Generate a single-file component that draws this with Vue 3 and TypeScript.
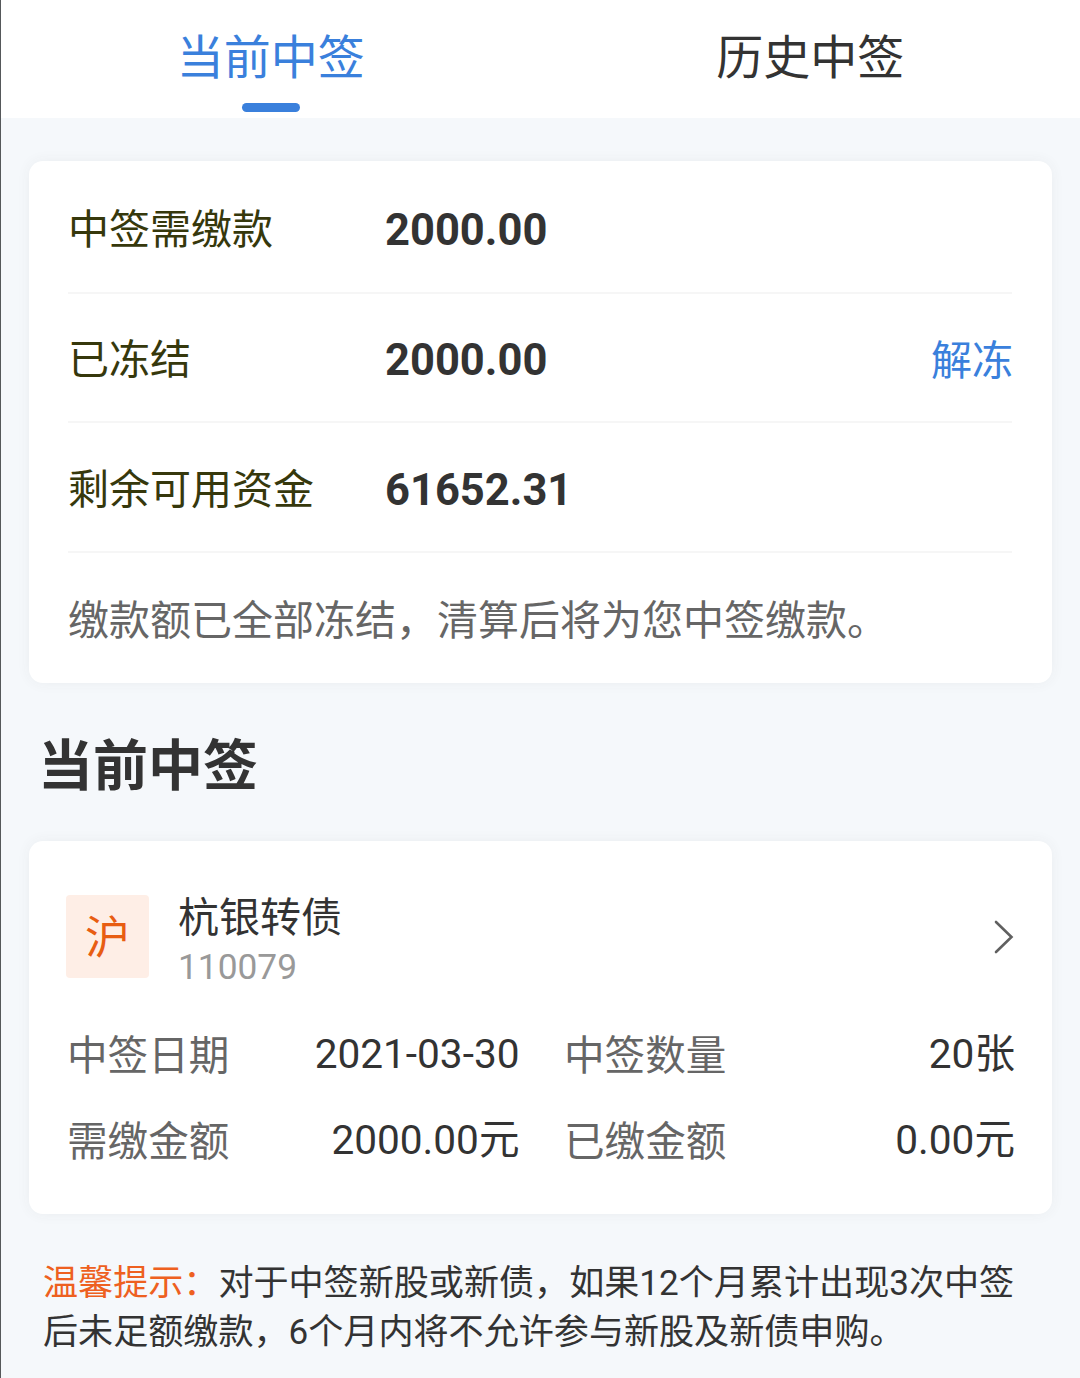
<script setup lang="ts">
interface Fund { label: string; value: string; action?: string }
interface Field { label: string; value: string }

const tabs: string[] = ['当前中签', '历史中签']
const funds: Fund[] = [
  { label: '中签需缴款', value: '2000.00' },
  { label: '已冻结', value: '2000.00', action: '解冻' },
  { label: '剩余可用资金', value: '61652.31' },
]
const fields: Field[] = [
  { label: '中签日期', value: '2021-03-30' },
  { label: '中签数量', value: '20张' },
  { label: '需缴金额', value: '2000.00元' },
  { label: '已缴金额', value: '0.00元' },
]
</script>

<template>
  <div class="page">
    <nav class="tabs">
      <div v-for="(tab, i) in tabs" :key="tab" class="tab" :class="{ active: i === 0 }">
        <span class="tab-text">{{ tab }}</span>
        <i class="bar"></i>
      </div>
    </nav>

    <section class="card funds">
      <div v-for="fund in funds" :key="fund.label" class="fund">
        <span class="fund-label">{{ fund.label }}</span>
        <b class="fund-value">{{ fund.value }}</b>
        <a v-if="fund.action" class="action">{{ fund.action }}</a>
      </div>
      <p class="note">缴款额已全部冻结，清算后将为您中签缴款。</p>
    </section>

    <h2 class="heading">当前中签</h2>

    <section class="card bond">
      <div class="bond-head">
        <span class="market">沪</span>
        <div class="bond-id">
          <span class="bond-name">杭银转债</span>
          <span class="bond-code">110079</span>
        </div>
        <svg class="arrow" width="20" height="34" viewBox="0 0 20 34" fill="none">
          <path d="M2 2 L17.5 17 L2 32" stroke="#606060" stroke-width="2.6" stroke-linecap="round" />
        </svg>
      </div>
      <div class="fields">
        <div v-for="field in fields" :key="field.label" class="field">
          <span class="field-label">{{ field.label }}</span>
          <span class="field-value">{{ field.value }}</span>
        </div>
      </div>
    </section>

    <p class="tip">
      <span class="tip-title">温馨提示：</span>对于中签新股或新债，如果12个月累计出现3次中签<br />后未足额缴款，6个月内将不允许参与新股及新债申购。
    </p>
  </div>
</template>

<style>
body {
  margin: 0;
  background: #f5f8fb;
}
</style>

<style scoped>
.page {
  box-sizing: border-box;
  width: 1080px;
  height: 1378px;
  overflow: hidden;
  border-left: 1px solid #55585a;
  background: #f5f8fb;
  color: #333;
  font-family: Roboto, "Noto Sans CJK SC", sans-serif;
  font-size: 41px;
}
.tabs {
  display: flex;
  height: 118px;
  background: #fff;
}
.tab {
  flex: 1;
  display: flex;
  flex-direction: column;
  align-items: center;
  font-size: 47px;
}
.tab-text {
  height: 60px;
  margin-top: 28px;
  line-height: 60px;
}
.bar {
  width: 58px;
  height: 9px;
  margin-top: 15px;
  border-radius: 5px;
}
.active {
  color: #3a80dc;
}
.active .bar {
  background: #3a80dc;
}
.card {
  box-sizing: border-box;
  width: 1023px;
  margin-left: 28px;
  border-radius: 14px;
  background: #fff;
  box-shadow: 0 0 14px rgba(60, 60, 60, 0.06);
}
.funds {
  height: 522px;
  margin-top: 43px;
  padding: 3px 40px 0 39px;
}
.fund {
  box-sizing: border-box;
  display: flex;
  align-items: center;
  height: 129.7px;
  border-bottom: 2px solid #f6f6f6;
}
.fund-label {
  width: 317px;
  padding-bottom: 3px;
  color: #36380c;
}
.fund-value {
  padding-top: 6px;
  font-size: 43.5px;
  font-weight: 700;
}
.action {
  margin-left: auto;
  margin-right: -1px;
  padding-bottom: 1px;
  color: #3a80dc;
}
.note {
  margin: 0;
  color: #666;
  line-height: 137px;
  white-space: nowrap;
}
.heading {
  height: 80px;
  margin: 43px 0 0 37px;
  font-size: 55px;
  font-weight: 700;
  line-height: 80px;
}
.bond {
  height: 373px;
  margin-top: 35px;
  padding: 54px 36px 0 37px;
}
.bond-head {
  display: flex;
  align-items: center;
  height: 83px;
}
.market {
  width: 83px;
  height: 83px;
  border-radius: 4px;
  background: #feeee6;
  color: #e85d12;
  font-size: 45px;
  line-height: 88px;
  text-align: center;
}
.bond-id {
  display: flex;
  flex-direction: column;
  margin-left: 29px;
  padding-top: 9px;
}
.bond-name {
  height: 52px;
  line-height: 52px;
}
.bond-code {
  height: 46px;
  color: #999;
  font-size: 35.3px;
  line-height: 46px;
}
.arrow {
  margin-left: auto;
  margin-right: 2px;
}
.fields {
  display: grid;
  grid-template-columns: 452.5px 451px;
  column-gap: 44.5px;
  margin: 33px 0 0 1px;
  font-size: 40.6px;
}
.field {
  display: flex;
  justify-content: space-between;
  height: 86px;
  line-height: 86px;
}
.field-label {
  padding-top: 2px;
  color: #666;
}
.tip {
  margin: 45px 0 0 42px;
  font-size: 35.1px;
  line-height: 49px;
  white-space: nowrap;
}
.tip-title {
  color: #ee6020;
}
</style>
